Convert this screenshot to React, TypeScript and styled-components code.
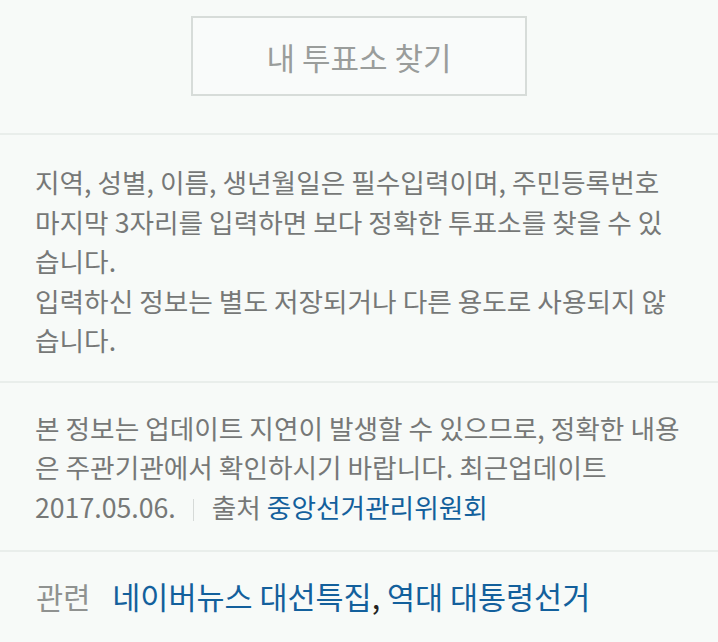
import React from 'react';
import styled, { createGlobalStyle } from 'styled-components';

const GlobalStyle = createGlobalStyle`
  html, body {
    margin: 0;
    padding: 0;
    background: #f7faf8;
  }
  body {
    font-family: "Noto Sans CJK KR", "Noto Sans", sans-serif;
    -webkit-font-smoothing: antialiased;
  }
`;

const Page = styled.div`
  width: 718px;
  min-height: 642px;
  background: #f7faf8;
`;

const ButtonArea = styled.div`
  display: flex;
  justify-content: center;
  padding: 16px 0 37px;
  border-bottom: 2px solid #e9eeeb;
`;

const FindButton = styled.button`
  width: 336px;
  height: 80px;
  border: 2px solid #d7dcd9;
  background: #f9fbfa;
  color: #9a9d9b;
  font-family: inherit;
  font-size: 31px;
  padding: 0;
  cursor: pointer;
`;

const Section = styled.div<{ $pad: string }>`
  padding: ${p => p.$pad};
  border-bottom: 2px solid #e9eeeb;
`;

const Paragraph = styled.p`
  margin: 0;
  color: #767877;
  font-size: 26.7px;
  line-height: 39.5px;
  white-space: nowrap;
`;

const Divider = styled.span`
  display: inline-block;
  width: 1px;
  height: 22px;
  background: #d6dad8;
  margin: 0 18px 0 17px;
  vertical-align: -3px;
`;

const Link = styled.a`
  color: #13609c;
  text-decoration: none;
`;

const RelatedRow = styled.div`
  padding: 22px 36px;
  font-size: 30.5px;
  line-height: 44px;
  color: #222;
`;

const RelatedLabel = styled.span`
  color: #8f9290;
  font-size: 29.5px;
  margin-right: 22px;
`;

export default function App() {
  return (
    <Page>
      <GlobalStyle />
      <ButtonArea>
        <FindButton>내 투표소 찾기</FindButton>
      </ButtonArea>
      <Section $pad="27px 35px 21px">
        <Paragraph>
          지역, 성별, 이름, 생년월일은 필수입력이며, 주민등록번호
          <br />
          마지막 3자리를 입력하면 보다 정확한 투표소를 찾을 수 있
          <br />
          습니다.
          <br />
          입력하신 정보는 별도 저장되거나 다른 용도로 사용되지 않
          <br />
          습니다.
        </Paragraph>
      </Section>
      <Section $pad="25px 35px 24px">
        <Paragraph>
          본 정보는 업데이트 지연이 발생할 수 있으므로, 정확한 내용
          <br />
          은 주관기관에서 확인하시기 바랍니다. 최근업데이트
          <br />
          2017.05.06.
          <Divider />
          출처 <Link href="#">중앙선거관리위원회</Link>
        </Paragraph>
      </Section>
      <RelatedRow>
        <RelatedLabel>관련</RelatedLabel>
        <Link href="#">네이버뉴스 대선특집</Link>, <Link href="#">역대 대통령선거</Link>
      </RelatedRow>
    </Page>
  );
}
